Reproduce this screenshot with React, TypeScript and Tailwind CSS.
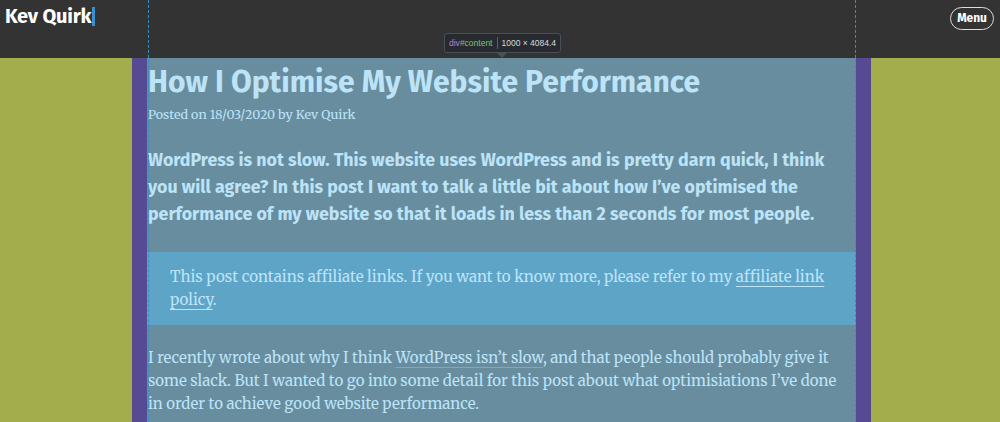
import React from "react";

const serif = { fontFamily: "Merriweather, 'DejaVu Serif', Georgia, serif" };

export default function App() {
  return (
    <div className="relative h-[422px] w-[1000px] overflow-hidden bg-[#a3ad4b] font-['Fira_Sans','Open_Sans',sans-serif]">
      {/* Header */}
      <header className="flex h-[58px] items-start justify-between bg-[#333333] pl-[5px] pr-[6px]">
        <div className="flex items-center pt-[3px]">
          <span className="text-[20px] font-bold leading-[26px] tracking-[-0.2px] text-white">Kev Quirk</span>
          <span className="ml-[1px] h-[19px] w-[3px] bg-[#3b8fd0]" />
        </div>
        <button className="mt-[7px] rounded-full border border-[#dddddd] px-[6px] py-[3px] text-[12px] font-bold leading-[15px] text-white">
          Menu
        </button>
      </header>

      {/* Page body */}
      <div className="flex h-[364px]">
        <div className="ml-[132px] flex w-[739px] bg-[#564a92] px-[15px]">
          <main className="w-[709px] bg-[#678d9f] text-[#bde3f7]">
            <h1 className="pl-[1px] pt-[4px] text-[30px] font-bold leading-[40px] text-[#bde3f7]">
              How I Optimise My Website Performance
            </h1>
            <p className="mt-[4px] pl-[1px] text-[12.5px] leading-[18px]" style={serif}>
              Posted on 18/03/2020 by Kev Quirk
            </p>
            <p className="mt-[23px] pl-[1px] pr-[10px] text-[17.8px] font-bold leading-[27px]">
              WordPress is not slow. This website uses WordPress and is pretty darn quick, I think you will agree? In this post I want to talk a little bit about how I’ve optimised the performance of my website so that it loads in less than 2 seconds for most people.
            </p>
            <div className="mt-[24px] bg-[#5da4c7] px-[23px] pb-[14px] pt-[13px] text-[15.1px] leading-[23px]" style={serif}>
              This post contains affiliate links. If you want to know more, please refer to my{" "}
              <span className="underline decoration-1 underline-offset-[4px]">affiliate link policy</span>.
            </div>
            <p className="mt-[21px] pl-[1px] pr-[10px] text-[15px] leading-[23px]" style={serif}>
              I recently wrote about why I think{" "}
              <span className="underline decoration-[#5bb4e8] decoration-1 underline-offset-[4px]">WordPress isn’t slow</span>, and that people should probably give it some slack. But I wanted to go into some detail for this post about what optimisiations I’ve done in order to achieve good website performance.
            </p>
          </main>
        </div>
      </div>

      {/* devtools overlay: guides + tooltip */}
      <div className="pointer-events-none absolute left-[148px] top-0 h-full border-l border-dashed border-[#3a8cc8]" />
      <div className="pointer-events-none absolute left-[855px] top-0 h-full border-l border-dashed border-[#3a8cc8]" />
      <div className="pointer-events-none absolute left-[444px] top-[33px]">
        <div className="flex items-center rounded-[3px] border border-[#4a5058] bg-[#272b30] px-[4px] py-[3px] font-['Liberation_Sans',sans-serif] text-[8.5px] leading-[12px]">
          <span className="text-[#c27ad1]">div</span>
          <span className="text-[#7ec36b]">#content</span>
          <span className="mx-[4px] h-[12px] w-px bg-[#5a6068]" />
          <span className="text-[#d8dadd]">1000 × 4084.4</span>
        </div>
        <div className="ml-[53px] h-0 w-0 border-x-[5px] border-t-[5px] border-x-transparent border-t-[#4a5058]" />
      </div>
    </div>
  );
}
